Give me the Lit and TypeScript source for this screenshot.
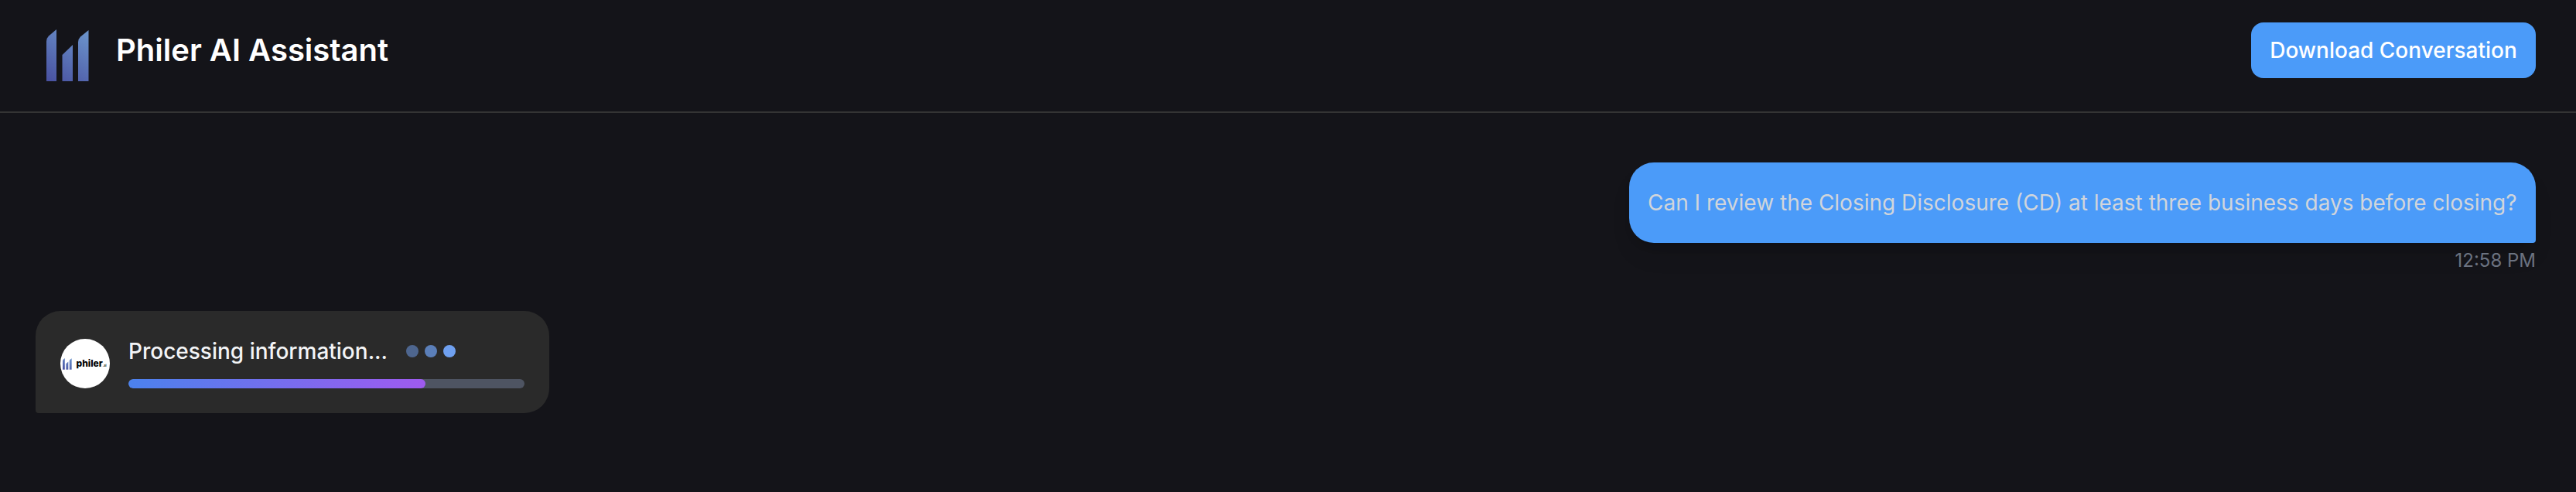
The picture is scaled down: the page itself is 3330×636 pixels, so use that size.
import { LitElement, html, css, svg } from "lit";
import { customElement } from "lit/decorators.js";

const bars = svg`
  <path d="M0 15.5Q0 11.5 3 8.5L13 0V67H0Z"/>
  <path d="M20.5 33L34 20V67H20.5Z"/>
  <path d="M41 16.5Q41 12.5 44 9.5L54.5 1V67H41Z"/>`;

const gradient = (id: string) => svg`
  <defs><linearGradient id=${id} gradientUnits="userSpaceOnUse" x1="5" y1="70" x2="48" y2="2">
    <stop offset="0" stop-color="#4850a0"/><stop offset="1" stop-color="#6b93cb"/>
  </linearGradient></defs>`;

@customElement("app-root")
export class AppRoot extends LitElement {
  static styles = css`
    :host { display: block; font-family: Inter, sans-serif; }
    * { box-sizing: border-box; }
    .page { height: 636px; background: #141419; overflow: hidden; }
    header { height: 146px; border-bottom: 2px solid #343434; padding: 29px 52px 0 60px; display: flex; align-items: flex-start; }
    .logo { width: 56px; height: 68px; margin-top: 9px; flex: none; }
    h1 { margin: 11px 0 0 34px; font-size: 40px; line-height: 50px; font-weight: 600; color: #fff; flex: 1; white-space: nowrap; }
    button { width: 368px; height: 72px; border: 0; border-radius: 16px; background: #4b9bf9; color: #fff; font: 500 28px/40px Inter, sans-serif; white-space: nowrap; padding: 0; }
    main { padding: 64px 52px 0 46px; display: flex; flex-direction: column; }
    .outgoing { align-self: flex-end; display: flex; flex-direction: column; align-items: flex-end; }
    .bubble { height: 104px; width: 1172px; padding: 0 24px; display: flex; align-items: center; background: #4b9bf9; color: #d1d5db; font-size: 28px; line-height: 40px; white-space: nowrap; border-radius: 32px 32px 4px 32px; box-shadow: 0 20px 30px -6px rgba(0,0,0,.1), 0 8px 12px -4px rgba(0,0,0,.1); }
    .time { margin-top: 7px; font-size: 24px; line-height: 32px; color: #6b7280; }
    .card { width: 664px; height: 132px; margin-top: 49px; padding: 36px 32px 32px; display: flex; gap: 24px; background: #2a2a2a; border-radius: 32px 32px 32px 4px; }
    .avatar { width: 64px; height: 64px; border-radius: 50%; background: #fff; flex: none; display: flex; align-items: center; padding-left: 3px; }
    .mini { width: 12px; height: 15px; flex: none; }
    .brand { margin-left: 5.5px; font-size: 12px; line-height: 16px; font-weight: 800; color: #000; }
    .ai { font-size: 4px; line-height: 16px; font-weight: 700; padding-top: 5px; color: #222; }
    .body { flex: 1; }
    .status { height: 40px; margin-top: -4px; display: flex; align-items: center; color: #f3f4f6; font-size: 28px; line-height: 40px; font-weight: 500; white-space: nowrap; }
    .label { width: 359px; }
    .dots { display: flex; gap: 8px; }
    .dot { width: 16px; height: 16px; border-radius: 50%; background: #4e668f; }
    .dot.mid { background: #5b7fb9; }
    .dot.on { background: #6fa0f0; }
    .track { margin-top: 16px; height: 12px; border-radius: 6px; background: #4e5462; overflow: hidden; }
    .fill { width: 384px; height: 12px; border-radius: 6px; background: linear-gradient(90deg, #4b82ee, #9f5aef); }
  `;

  render() {
    return html`<div class="page">
      <header>
        <svg class="logo" viewBox="0 0 56 68">${gradient("g1")}<g fill="url(#g1)">${bars}</g></svg>
        <h1>Philer AI Assistant</h1>
        <button>Download Conversation</button>
      </header>
      <main>
        <div class="outgoing">
          <div class="bubble"><span>Can I review the Closing Disclosure (CD) at least three business days before closing?</span></div>
          <div class="time">12:58 PM</div>
        </div>
        <div class="card">
          <div class="avatar">
            <svg class="mini" viewBox="0 0 56 68" preserveAspectRatio="none">${gradient("g2")}<g fill="url(#g2)">${bars}</g></svg>
            <span class="brand">philer</span><span class="ai">.ai</span>
          </div>
          <div class="body">
            <div class="status"><span class="label">Processing information...</span>
              <div class="dots"><i class="dot"></i><i class="dot mid"></i><i class="dot on"></i></div>
            </div>
            <div class="track"><div class="fill"></div></div>
          </div>
        </div>
      </main>
    </div>`;
  }
}
